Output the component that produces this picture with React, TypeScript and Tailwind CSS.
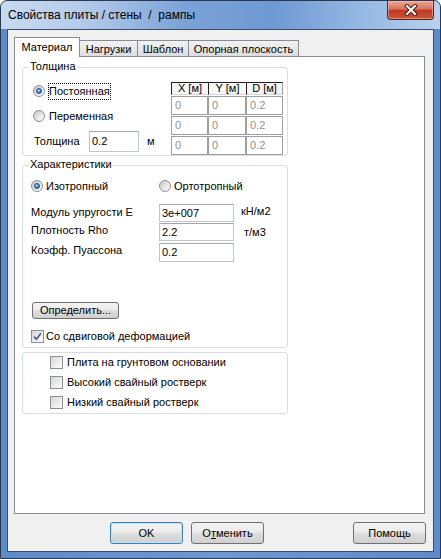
import React from "react";

function Radio({ checked }: { checked?: boolean }) {
  return (
    <span className="flex h-[12px] w-[12px] shrink-0 items-center justify-center rounded-full border border-[#8e8f8f] bg-[linear-gradient(135deg,#c4c4c4,#eeeeee_65%,#ffffff)]">
      {checked && (
        <span className="h-[6px] w-[6px] rounded-full border border-[#1b4f8a] bg-[radial-gradient(circle_at_40%_35%,#b4e2ff,#3a8ad0_55%,#0e4a8e)]" />
      )}
    </span>
  );
}

function Check({ checked }: { checked?: boolean }) {
  return (
    <span className="flex h-[13px] w-[13px] shrink-0 items-center justify-center border border-[#8e8f8f] bg-[linear-gradient(135deg,#d6d6d6,#f2f2f2_70%,#ffffff)]">
      {checked && (
        <svg width="9" height="9" viewBox="0 0 9 9">
          <path d="M1 4.6 L3.4 7.2 L8 1.2" stroke="#4a5f97" strokeWidth="1.7" fill="none" />
        </svg>
      )}
    </span>
  );
}

function Cell({ w, children }: { w: string; children: React.ReactNode }) {
  return (
    <div className={`flex h-[19px] items-center border border-[#a0a0a0] pl-[3px] text-[#909090] ${w}`}>
      {children}
    </div>
  );
}

function DataRow({ top }: { top: string }) {
  return (
    <div className={`flex ${top}`}>
      <Cell w="w-[37px]">0</Cell>
      <Cell w="w-[38px]">0</Cell>
      <Cell w="w-[37px]">0.2</Cell>
    </div>
  );
}

const inputCls =
  "flex items-center border border-[#c2c5ca] border-t-[#a3a6ad] bg-white pl-[2px]";

const btnCls =
  "flex items-center justify-center rounded-[3px] border bg-[linear-gradient(#f3f3f3,#ececec_45%,#dedede_50%,#d0d0d0)]";

export default function App() {
  return (
    <div className="h-[559px] w-[441px] overflow-hidden rounded-t-[7px] border border-[#2a3950] bg-[linear-gradient(90deg,#5d8bcb,#6c98d3_50%,#5d8bcb)] font-['Liberation_Sans',Arial,sans-serif] text-[11px] leading-[13px] text-black">
      {/* Title bar */}
      <div className="flex h-[28px] items-start justify-between bg-[linear-gradient(90deg,#c8daf0_0%,#b5ccea_18%,#7ba2d7_42%,#6f99d3_62%,#9dbde6_86%,#b9d1ee_100%)]">
        <div className="whitespace-pre pl-[7px] pt-[7px] text-[12px] leading-[14px]">
          Свойства плиты / стены  /  рампы
        </div>
        <div className="mr-[6px] flex h-[19px] w-[47px] items-center justify-center rounded-b-[4px] border border-t-0 border-[#5a2418] bg-[linear-gradient(#eaa898,#d8705c_45%,#bf3a22_52%,#c9543a_100%)] shadow-[inset_0_0_0_1px_rgba(255,200,190,0.5)]">
          <svg width="14" height="12" viewBox="0 0 14 12">
            <path d="M3 2 L11 10 M11 2 L3 10" stroke="#4a1a12" strokeWidth="4" strokeLinecap="square" />
            <path d="M3 2 L11 10 M11 2 L3 10" stroke="#ffffff" strokeWidth="2" strokeLinecap="square" />
          </svg>
        </div>
      </div>

      {/* Client area */}
      <div className="ml-[6px] h-[523px] w-[427px] border border-[#3b4d68] bg-[#f0f0f0]">
        <div className="pl-[6px] pt-[7px]">
          {/* Tabs */}
          <div className="flex h-[19px] items-end">
            <div className="relative z-10 -mb-px flex h-[20px] w-[66px] items-center justify-center border border-b-0 border-[#898c95] bg-white">
              Материал
            </div>
            <div className="flex h-[16px] w-[58px] items-center justify-center border-r border-t border-[#898c95] bg-[linear-gradient(#f3f3f3,#e8e8e8_50%,#dcdcdc)] pt-[2px]">
              Нагрузки
            </div>
            <div className="flex h-[16px] w-[51px] items-center justify-center border-r border-t border-[#898c95] bg-[linear-gradient(#f3f3f3,#e8e8e8_50%,#dcdcdc)] pt-[2px]">
              Шаблон
            </div>
            <div className="flex h-[16px] w-[110px] items-center justify-center border-r border-t border-[#898c95] bg-[linear-gradient(#f3f3f3,#e8e8e8_50%,#dcdcdc)] pt-[2px]">
              Опорная плоскость
            </div>
          </div>

          {/* Panel */}
          <div className="h-[458px] w-[411px] border border-[#898c95] bg-white">
            {/* Group 1: Толщина */}
            <div className="relative ml-[7px] mt-[10px] h-[89px] w-[266px] rounded-[3px] border border-[#d5dfe5]">
              <span className="absolute left-[6px] top-[-8px] bg-white px-px">Толщина</span>
              <div className="flex">
                <div className="w-[148px] pl-[10px] pt-[14px]">
                  <div className="flex h-[18px] items-center">
                    <Radio checked />
                    <span className="ml-[3px] border border-dotted border-black leading-[15px]">Постоянная</span>
                  </div>
                  <div className="mt-[7px] flex h-[18px] items-center">
                    <Radio />
                    <span className="ml-[4px]">Переменная</span>
                  </div>
                  <div className="mt-[6px] flex h-[21px] items-center pl-px">
                    <span className="w-[55px]">Толщина</span>
                    <div className={`${inputCls} h-[21px] w-[50px]`}>0.2</div>
                    <span className="ml-[8px]">м</span>
                  </div>
                </div>
                <div className="pt-[14px]">
                  <div className="flex h-[13px]">
                    <div className="flex w-[37px] items-center justify-center border-l border-t border-[#202020] border-b border-b-[#d8d8d8] bg-[#f6f6f6]">X [м]</div>
                    <div className="flex w-[38px] items-center justify-center border-l border-t border-[#202020] border-b border-b-[#d8d8d8] bg-[#f6f6f6]">Y [м]</div>
                    <div className="flex w-[37px] items-center justify-center border-l border-t border-[#202020] border-b border-b-[#d8d8d8] border-r border-r-[#a0a0a0] bg-[#f6f6f6]">D [м]</div>
                  </div>
                  <DataRow top="mt-[1px]" />
                  <DataRow top="mt-[1px]" />
                  <DataRow top="mt-[1px]" />
                </div>
              </div>
            </div>

            {/* Group 2: Характеристики */}
            <div className="relative ml-[7px] mt-[9px] h-[183px] w-[266px] rounded-[3px] border border-[#d5dfe5]">
              <span className="absolute left-[6px] top-[-8px] bg-white px-px">Характеристики</span>
              <div className="pt-[11px]">
                <div className="flex h-[18px] items-center pl-[8px]">
                  <div className="flex w-[128px] items-center">
                    <Radio checked />
                    <span className="ml-[3px]">Изотропный</span>
                  </div>
                  <Radio />
                  <span className="ml-[3px]">Ортотропный</span>
                </div>

                <div className="mt-[9px] flex h-[18px] pl-[8px]">
                  <span className="w-[128px] self-start pt-[1px] leading-[14px]">Модуль упругости Е</span>
                  <div className={`${inputCls} h-[18px] w-[75px]`}>3e+007</div>
                  <span className="ml-[7px] self-start leading-[14px]">кН/м2</span>
                </div>
                <div className="mt-[1px] flex h-[18px] pl-[8px]">
                  <span className="w-[128px] self-start leading-[14px]">Плотность Rho</span>
                  <div className={`${inputCls} h-[18px] w-[75px]`}>2.2</div>
                  <span className="ml-[10px] self-start pt-[2px] leading-[14px]">т/м3</span>
                </div>
                <div className="mt-[2px] flex h-[19px] pl-[8px]">
                  <span className="w-[128px] self-start leading-[14px]">Коэфф. Пуассона</span>
                  <div className={`${inputCls} h-[19px] w-[75px]`}>0.2</div>
                </div>

                <div className={`${btnCls} ml-[9px] mt-[40px] h-[17px] w-[87px] border-[#707070]`}>
                  Определить...
                </div>

                <div className="mt-[8px] flex h-[18px] items-center pl-[8px]">
                  <Check checked />
                  <span className="ml-[2px]">Со сдвиговой деформацией</span>
                </div>
              </div>
            </div>

            {/* Group 3 */}
            <div className="ml-[7px] mt-[4px] h-[62px] w-[266px] rounded-[3px] border border-[#d5dfe5] pl-[27px]">
              <div className="flex h-[18px] items-center">
                <Check />
                <span className="ml-[4px]">Плита на грунтовом основании</span>
              </div>
              <div className="mt-[2px] flex h-[18px] items-center">
                <Check />
                <span className="ml-[4px]">Высокий свайный ростверк</span>
              </div>
              <div className="mt-[2px] flex h-[18px] items-center">
                <Check />
                <span className="ml-[4px]">Низкий свайный ростверк</span>
              </div>
            </div>
          </div>
        </div>

        {/* Bottom buttons */}
        <div className="mt-[8px] flex pl-[102px]">
          <div className={`${btnCls} h-[22px] w-[73px] border-[#3c7fb1] shadow-[inset_0_0_0_1px_#bfe3f8]`}>OK</div>
          <div className={`${btnCls} ml-[8px] h-[22px] w-[73px] border-[#707070]`}>
            <span>
              О<span className="underline">т</span>менить
            </span>
          </div>
          <div className={`${btnCls} ml-[89px] h-[22px] w-[73px] border-[#707070]`}>Помощь</div>
        </div>
      </div>
    </div>
  );
}
